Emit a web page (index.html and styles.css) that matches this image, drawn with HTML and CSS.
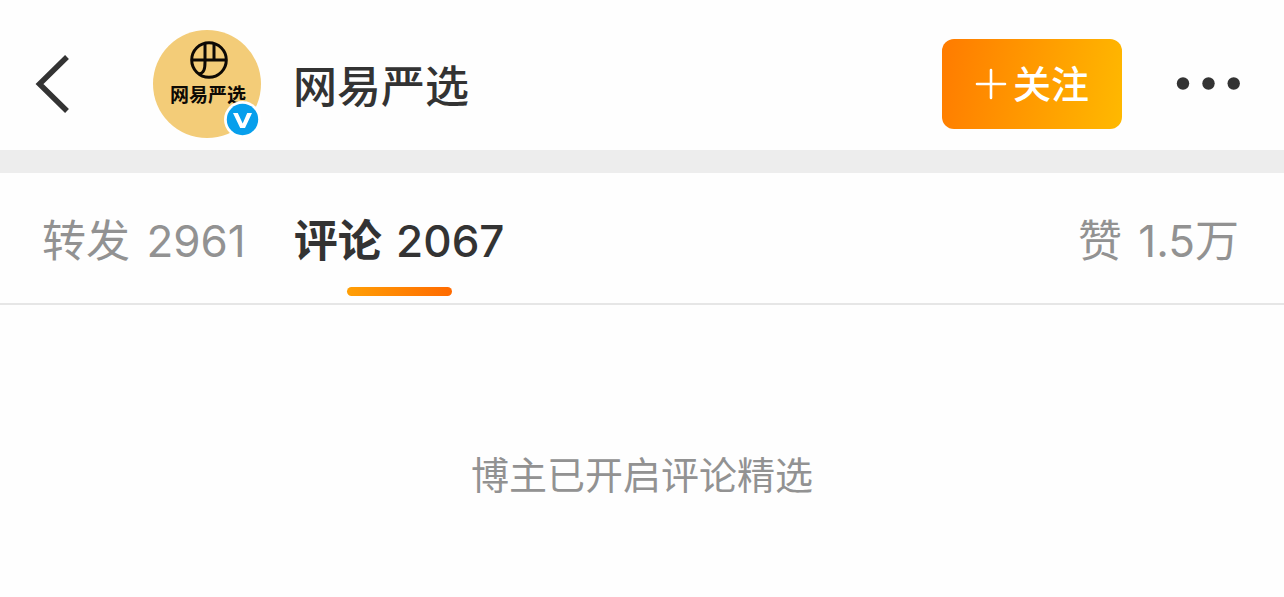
FILE: index.html
```html
<!DOCTYPE html>
<html lang="zh-CN">
<head>
<meta charset="utf-8">
<meta name="viewport" content="width=device-width, initial-scale=1">
<title>网易严选</title>
<link rel="stylesheet" href="styles.css">
</head>
<body>
<header class="header">
  <button class="icon-button" type="button" aria-label="返回">
    <svg width="36" height="60" viewBox="0 0 36 60" fill="none" stroke="#333" stroke-width="5.500"><path d="M33 3L5.500 30L33 57"/></svg>
  </button>
  <div class="avatar">
    <svg class="avatar-logo" width="40" height="40" viewBox="0 0 40 40" fill="none" stroke="#0d0904" stroke-width="3"><circle cx="21" cy="20" r="17.300"/><path d="M4 20H38M17 4V22C17 29 16 33 11 34M26 4V20"/></svg>
    <span class="avatar-name">网易严选</span>
    <svg class="badge" width="38" height="38" viewBox="0 0 38 38"><circle cx="19.500" cy="19.500" r="18.500" fill="#fff"/><circle cx="19.500" cy="19.500" r="15.700" fill="#079fec"/><path d="M10 13H14.800L19.700 23.500L24.200 13H29L22 28H17.200Z" fill="#fff"/></svg>
  </div>
  <h1 class="name">网易严选</h1>
  <button class="follow" type="button">
    <svg width="32" height="32" viewBox="0 0 32 32" stroke="#fff" stroke-width="2.600" stroke-linecap="round"><path d="M2 16H30M16 2V30"/></svg>
    <span class="follow-label">关注</span>
  </button>
  <button class="icon-button" type="button" aria-label="更多">
    <svg width="64" height="14" viewBox="0 0 64 14" fill="#333"><circle cx="7" cy="6.500" r="6.200"/><circle cx="32.500" cy="6.500" r="6.200"/><circle cx="57.700" cy="6.500" r="6.200"/></svg>
  </button>
</header>
<nav class="tabs">
  <button class="tab" type="button"><span class="tab-label">转发</span> <span>2961</span></button>
  <button class="tab tab-active" type="button" aria-current="true"><span class="tab-label">评论</span> <span class="tab-count">2067</span></button>
  <button class="tab tab-likes" type="button"><span class="tab-label">赞</span> <span>1.5万</span></button>
</nav>
<main class="empty"><p>博主已开启评论精选</p></main>
</body>
</html>
```
FILE: styles.css
```css
* {
  box-sizing: border-box;
}

body {
  margin: 0;
  background: #fefefe;
  color: #333;
  font-family: Inter, "Noto Sans CJK SC", sans-serif;
}

button {
  padding: 0;
  border: 0;
  background: none;
  color: inherit;
  font: inherit;
  cursor: pointer;
}

svg {
  display: block;
}

.header {
  display: flex;
  align-items: center;
  height: 150px;
  padding: 18px 44px 0 34px;
}

.icon-button {
  flex: none;
}

.avatar {
  position: relative;
  display: flex;
  flex: none;
  flex-direction: column;
  align-items: center;
  width: 108px;
  height: 108px;
  margin-left: 83px;
  padding: 10px 0 0 2px;
  border-radius: 50%;
  background: #f3cc78;
}

.avatar-name {
  color: #0d0904;
  font-size: 19px;
  font-weight: 700;
  line-height: 32px;
}

.badge {
  position: absolute;
  right: 0;
  bottom: 0;
}

.name {
  flex: 1;
  margin: 0 0 0 32px;
  padding-top: 6px;
  font-size: 44px;
  font-weight: 500;
  line-height: 64px;
}

.follow {
  display: flex;
  flex: none;
  align-items: center;
  justify-content: center;
  gap: 6px;
  width: 180px;
  height: 90px;
  margin-right: 54px;
  border-radius: 12px;
  background: linear-gradient(100deg, #ff7b00, #ffb900);
  color: #fff;
  font-size: 38px;
  font-weight: 500;
}

.follow-label {
  padding-bottom: 6px;
}

.tabs {
  display: flex;
  gap: 48px;
  height: 155px;
  padding: 0 45px 0 42px;
  border-top: 23px solid #ededed;
  border-bottom: 2px solid #e6e6e6;
}

.tab {
  position: relative;
  color: #929292;
  font-size: 44px;
  white-space: nowrap;
}

.tab-label {
  margin-right: 4px;
}

.tab-active {
  color: #333;
  font-weight: 700;
}

.tab-active::after {
  position: absolute;
  bottom: 7px;
  left: calc(50% - 52px);
  width: 105px;
  height: 9px;
  border-radius: 5px;
  background: linear-gradient(90deg, #ff9f05, #ff6a00);
  content: "";
}

.tab-count {
  font-weight: 500;
}

.tab-likes {
  margin-left: auto;
}

.empty {
  padding: 142px 24px 90px;
  color: #929292;
  font-size: 38px;
  line-height: 56px;
  text-align: center;
}

.empty p {
  margin: 0;
}
```
